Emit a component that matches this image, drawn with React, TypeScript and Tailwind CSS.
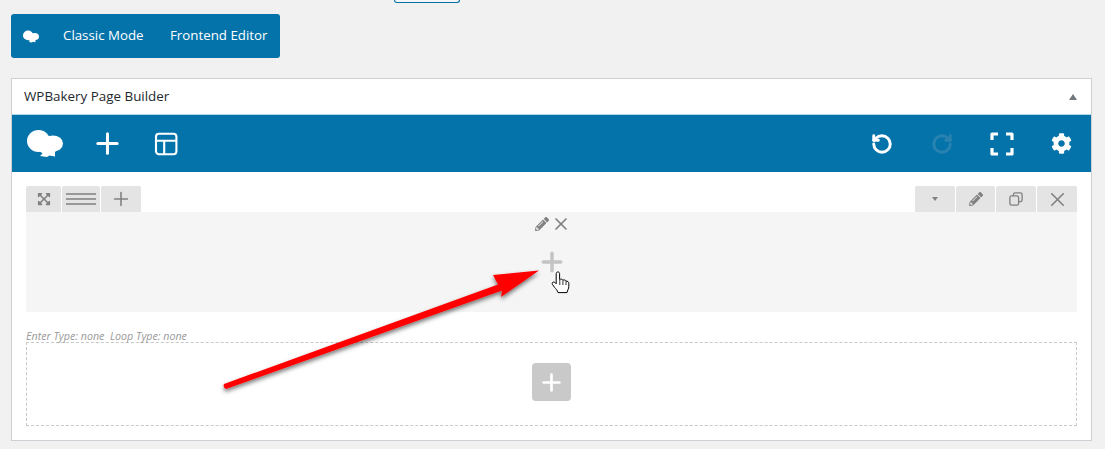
import { FaCog, FaExpandArrowsAlt, FaPencilAlt } from "react-icons/fa";
import { Plus, RotateCcw, RotateCw, X } from "lucide-react";

const font = { fontFamily: '"Open Sans", "Noto Sans", "Liberation Sans", sans-serif' };

function Logo({ className }: { className: string }) {
  return (
    <svg viewBox="0 0 36 27" className={className} fill="#fff">
      <ellipse cx="11.5" cy="11" rx="11.5" ry="11" />
      <ellipse cx="26" cy="13.5" rx="10" ry="8" />
      <path d="M9 18 H32 L28 22 V26.5 L22.5 25.5 L20 27 L13 26 L15.5 23.5 Z" />
    </svg>
  );
}

function LayoutIcon() {
  return (
    <svg viewBox="0 0 24 24" className="w-[24px] h-[24px]" fill="none" stroke="#fff" strokeWidth="2.1">
      <rect x="2" y="1.8" width="20.4" height="20.4" rx="3" />
      <path d="M2 8.8H22M10.2 8.8V22" />
    </svg>
  );
}

function Corners() {
  return (
    <svg viewBox="0 0 24 24" className="w-[24px] h-[24px]" fill="none" stroke="#fff" strokeWidth="3.2" strokeLinejoin="round">
      <path d="M2 8V2H8M16 2H22V8M22 16V22H16M8 22H2V16" />
    </svg>
  );
}

function CopyIcon() {
  return (
    <svg viewBox="0 0 16 16" className="w-[14px] h-[14px]" fill="none" stroke="#808080" strokeWidth="1.5">
      <rect x="5" y="1" width="10" height="10" rx="2" />
      <rect x="1" y="4.5" width="10" height="10.5" rx="2" fill="#e3e3e3" />
    </svg>
  );
}

function Tab({ w, ml, children }: { w: string; ml?: boolean; children: React.ReactNode }) {
  return (
    <div className={`${w} ${ml ? "ml-px" : ""} h-[26px] bg-[#e4e4e4] flex items-center justify-center rounded-t-[2px]`}>
      {children}
    </div>
  );
}

export default function App() {
  return (
    <div className="relative w-[1105px] h-[449px] overflow-hidden bg-[#f1f1f1]" style={font}>
      {/* cut off button at the very top */}
      <div className="ml-[394px] w-[66px] h-[3px] bg-[#f3f5f6] border border-t-0 border-[#0071a1] rounded-b-[3px]" />

      {/* mode switch */}
      <div className="ml-[11px] mt-[11px] w-[269px] h-[44px] bg-[#0473aa] rounded-[3px] flex items-center text-white text-[13.3px]">
        <Logo className="ml-[12px] w-[16px] h-[13px]" />
        <span className="ml-[24px] w-[107px]">Classic Mode</span>
        <span>Frontend Editor</span>
      </div>

      {/* panel */}
      <div className="ml-[11px] mt-[20px] w-[1081px] h-[363px] bg-white border border-[#ccd0d4]">
        <div className="h-[36px] flex items-center justify-between pl-[12px] pr-[14px] border-b border-[#b5d5e5] text-[13.4px] font-medium text-[#23282d]">
          <span>WPBakery Page Builder</span>
          <div className="w-0 h-0 border-x-[4.5px] border-x-transparent border-b-[6px] border-b-[#72777c]" />
        </div>

        <div className="h-[57px] bg-[#0473aa] flex items-center">
          <Logo className="ml-[15px] w-[36px] h-[27px]" />
          <Plus className="ml-[28px] text-white" size={33} strokeWidth={2.2} />
          <div className="ml-[30px]"><LayoutIcon /></div>
          <div className="ml-auto flex items-center pr-[19px]">
            <RotateCcw className="text-white" size={22} strokeWidth={3.2} />
            <RotateCw className="ml-[38px] text-[#2a82b0]" size={22} strokeWidth={3.2} />
            <div className="ml-[37px]"><Corners /></div>
            <FaCog className="ml-[37px] text-white" size={21} />
          </div>
        </div>

        <div className="px-[14px] pt-[14px]">
          <div className="flex justify-between">
            <div className="flex">
              <Tab w="w-[35px]"><FaExpandArrowsAlt className="text-[#808080]" size={14} /></Tab>
              <Tab w="w-[38px]" ml>
                <div className="w-[30px] flex flex-col gap-[3px]">
                  <div className="h-[2px] bg-[#999]" />
                  <div className="h-[2px] bg-[#999]" />
                  <div className="h-[2px] bg-[#999]" />
                </div>
              </Tab>
              <Tab w="w-[40px]" ml><Plus className="text-[#808080]" size={22} strokeWidth={1.7} /></Tab>
            </div>
            <div className="flex">
              <Tab w="w-[40px]">
                <div className="w-0 h-0 border-x-[3.5px] border-x-transparent border-t-[4px] border-t-[#808080]" />
              </Tab>
              <Tab w="w-[39px]" ml><FaPencilAlt className="text-[#808080]" size={14} /></Tab>
              <Tab w="w-[40px]" ml><CopyIcon /></Tab>
              <Tab w="w-[40px]" ml><X className="text-[#808080]" size={23} strokeWidth={1.6} /></Tab>
            </div>
          </div>

          <div className="h-[100px] bg-[#f5f5f5] flex flex-col items-center">
            <div className="mt-[2px] ml-[3px] flex items-center gap-[2px]">
              <FaPencilAlt className="text-[#808080]" size={14} />
              <X className="text-[#808080]" size={20} strokeWidth={2} />
            </div>
            <Plus className="mt-[13px] text-[#c4c4c4]" size={30} strokeWidth={2.8} />
          </div>

          <div className="mt-[18px] h-[12px] flex items-center text-[10.7px] italic text-[#999] whitespace-pre leading-none">
            Enter Type: none  Loop Type: none
          </div>
          <div className="h-[84px] pb-[4px] border border-dashed border-[#c8c8c8] flex items-center justify-center">
            <div className="w-[39px] h-[38px] bg-[#c9c9c9] rounded-[4px] flex items-center justify-center">
              <Plus className="text-white" size={27} strokeWidth={2.4} />
            </div>
          </div>
        </div>
      </div>

      {/* red arrow annotation */}
      <svg viewBox="0 0 1105 449" className="absolute left-0 top-0 w-[1105px] h-[449px] pointer-events-none">
        <defs>
          <filter id="arrowShadow" x="-10%" y="-10%" width="120%" height="130%">
            <feDropShadow dx="0" dy="2.5" stdDeviation="2" floodColor="#000" floodOpacity="0.55" />
          </filter>
        </defs>
        <path
          d="M224 384 L498 284.5 L493 275 L539 270.5 L501 297 L502 290.5 L226 389 Q222.5 387 224 384 Z"
          fill="#ff0000"
          filter="url(#arrowShadow)"
        />
        {/* hand cursor */}
        <path
          d="M556.2 273.6 C556.2 271.4 559.6 271.4 559.6 273.6 V279.6 C561 278.8 562.4 279 562.8 280.2 C564.2 279.6 565.6 280 566 281.2 C567.4 281 568.8 281.6 568.8 283.4 V286.6 C568.8 288.6 567.4 290.4 567 292.6 H558 C557.4 290.4 556 289 554.6 287.4 L552.4 284.4 C551.4 282.8 553.4 281.2 554.8 282.4 L556.2 283.8 Z"
          fill="#fff"
          stroke="#000"
          strokeWidth="1"
          strokeLinejoin="round"
        />
        <path d="M559.8 280 V285 M562.9 280.4 V285 M566 281.4 V285" stroke="#000" strokeWidth="0.8" fill="none" />
      </svg>
    </div>
  );
}
